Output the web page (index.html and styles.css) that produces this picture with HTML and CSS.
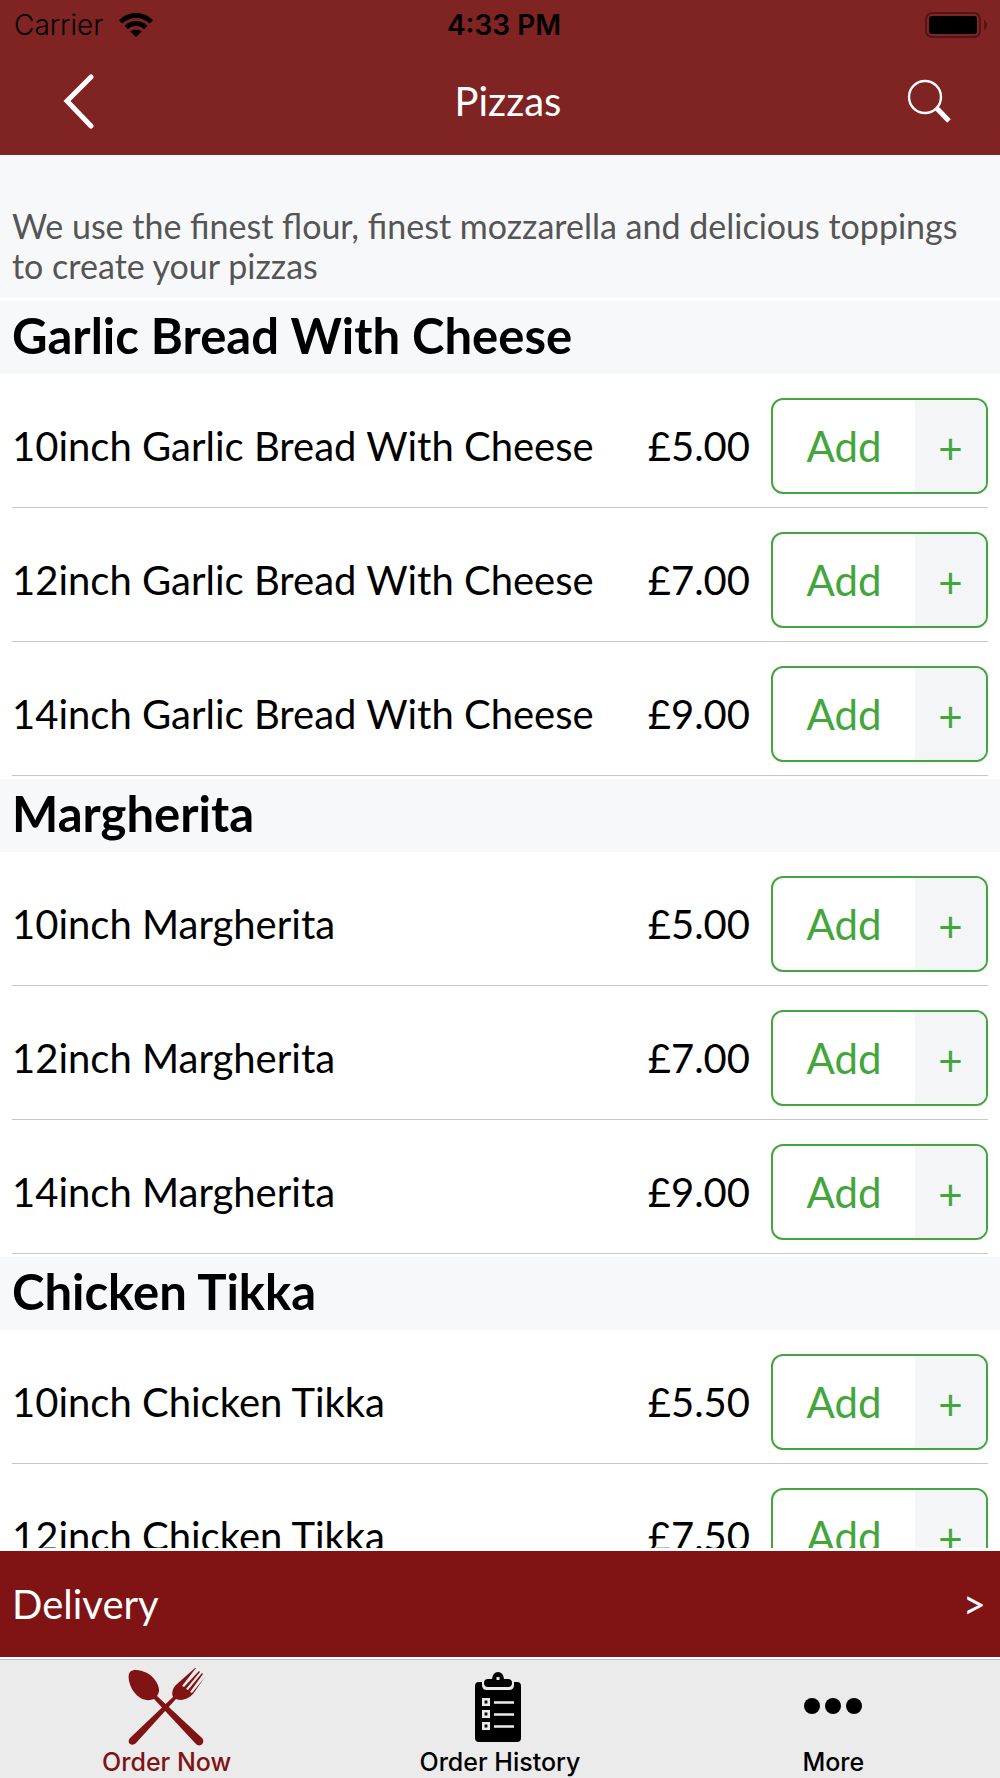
FILE: index.html
```html
<!DOCTYPE html>
<html lang="en">
<head>
    <meta charset="UTF-8">
    <meta name="viewport" content="width=device-width, initial-scale=1.0">
    <title>Pizzas</title>
    <link rel="stylesheet" href="styles.css">
</head>
<body>
    <header class="header">
        <div class="status-bar">
            <div class="carrier">
                <span>Carrier</span>
                <svg width="34" height="24" viewBox="0 0 34 24" aria-hidden="true">
                    <path d="M0 7.200C9.500-2.400 24.500-2.400 34 7.200L30.700 10.500C23 3 11 3 3.300 10.500Z"/>
                    <path d="M5.500 12.700C12 6.500 22 6.500 28.500 12.700L25 16.200C20.500 12 13.500 12 9 16.200Z"/>
                    <path d="M11.300 18.400C14.500 15.700 19.500 15.700 22.700 18.400L17 24Z"/>
                </svg>
            </div>
            <time class="clock">4:33 PM</time>
            <svg class="battery" width="64" height="28" viewBox="0 0 64 28" aria-hidden="true">
                <rect x="2" y="2" width="54" height="24" rx="6" fill="none" stroke="#521617" stroke-width="2"/>
                <rect x="5" y="5" width="48" height="18" rx="3"/>
                <path d="M60 9C64 11 64 17 60 19Z" fill="#521617"/>
            </svg>
        </div>
        <div class="nav-bar">
            <button class="icon-btn" type="button" aria-label="Back">
                <svg width="32" height="56" viewBox="0 0 32 56" fill="none" stroke="#fff" stroke-width="5" stroke-linecap="round">
                    <path d="M28 4L4 28L28 53"/>
                </svg>
            </button>
            <h1>Pizzas</h1>
            <button class="icon-btn" type="button" aria-label="Search">
                <svg width="44" height="44" viewBox="0 0 44 44" fill="none" stroke="#fff">
                    <circle cx="18" cy="18" r="16" stroke-width="2.400"/>
                    <path d="M29 28.500L42 42" stroke-width="5"/>
                </svg>
            </button>
        </div>
    </header>

    <main class="menu">
        <p class="description">We use the finest flour, finest mozzarella and delicious toppings to create your pizzas</p>

        <section class="group">
            <h2>Garlic Bread With Cheese</h2>
            <ul>
                <li class="item">
                    <span class="name">10inch Garlic Bread With Cheese</span>
                    <span class="price">£5.00</span>
                    <div class="add"><button class="add-btn" type="button">Add</button><button class="plus-btn" type="button">+</button></div>
                </li>
                <li class="item">
                    <span class="name">12inch Garlic Bread With Cheese</span>
                    <span class="price">£7.00</span>
                    <div class="add"><button class="add-btn" type="button">Add</button><button class="plus-btn" type="button">+</button></div>
                </li>
                <li class="item">
                    <span class="name">14inch Garlic Bread With Cheese</span>
                    <span class="price">£9.00</span>
                    <div class="add"><button class="add-btn" type="button">Add</button><button class="plus-btn" type="button">+</button></div>
                </li>
            </ul>
        </section>

        <section class="group">
            <h2>Margherita</h2>
            <ul>
                <li class="item">
                    <span class="name">10inch Margherita</span>
                    <span class="price">£5.00</span>
                    <div class="add"><button class="add-btn" type="button">Add</button><button class="plus-btn" type="button">+</button></div>
                </li>
                <li class="item">
                    <span class="name">12inch Margherita</span>
                    <span class="price">£7.00</span>
                    <div class="add"><button class="add-btn" type="button">Add</button><button class="plus-btn" type="button">+</button></div>
                </li>
                <li class="item">
                    <span class="name">14inch Margherita</span>
                    <span class="price">£9.00</span>
                    <div class="add"><button class="add-btn" type="button">Add</button><button class="plus-btn" type="button">+</button></div>
                </li>
            </ul>
        </section>

        <section class="group">
            <h2>Chicken Tikka</h2>
            <ul>
                <li class="item">
                    <span class="name">10inch Chicken Tikka</span>
                    <span class="price">£5.50</span>
                    <div class="add"><button class="add-btn" type="button">Add</button><button class="plus-btn" type="button">+</button></div>
                </li>
                <li class="item">
                    <span class="name">12inch Chicken Tikka</span>
                    <span class="price">£7.50</span>
                    <div class="add"><button class="add-btn" type="button">Add</button><button class="plus-btn" type="button">+</button></div>
                </li>
            </ul>
        </section>
    </main>

    <button class="delivery" type="button">
        <span>Delivery</span>
        <span class="arrow">&gt;</span>
    </button>

    <nav class="tabs">
        <a class="tab active" href="#order">
            <svg width="78" height="78" viewBox="1 0 78 78" fill="currentColor" aria-hidden="true">
                <!-- spoon -->
                <path d="M3 4C8-1 23 4 28 12C33 19 33 24 30 28L75 70C79 75 73 80 69 76L27 31C20 34 12 31 7 24C2 17 0 8 3 4Z"/>
                <!-- fork -->
                <path d="M69 0L55 18L57 19L72 3L73 4L59 21L61 22L75 5L76 6L63 24L65 25L78 9L66 26C60 32 54 33 49 31L9 75C5 79-1 75 3 70L46 29C44 25 46 19 50 16L68 0Z"/>
            </svg>
            <span>Order Now</span>
        </a>
        <a class="tab" href="#history">
            <svg width="78" height="78" viewBox="2 0 78 78" fill="currentColor" aria-hidden="true">
                <path d="M20 14H23V17Q23 22 28 22H50Q55 22 55 17V14H58Q62 14 62 18V70Q62 74 58 74H20Q16 74 16 70V18Q16 14 20 14Z"/>
                <path fill-rule="evenodd" d="M29 11H33Q34 4 39 4Q44 4 45 11H49Q53 11 53 15Q53 19 49 19H29Q25 19 25 15Q25 11 29 11ZM37.500 9V12H40.500V9Z"/>
                <g fill="none" stroke="#ebebeb">
                    <path stroke-width="2.600" d="M24.300 31.300h5.400v5.400h-5.400zM24.300 43.300h5.400v5.400h-5.400zM24.300 55.300h5.400v5.400h-5.400z"/>
                    <path stroke-width="2.400" d="M35 34.500H55M35 46.500H55M35 58.500H55"/>
                </g>
            </svg>
            <span>Order History</span>
        </a>
        <a class="tab" href="#more">
            <svg width="78" height="78" viewBox="0 0 78 78" fill="currentColor" aria-hidden="true">
                <circle cx="18" cy="38" r="8"/>
                <circle cx="39" cy="38" r="8"/>
                <circle cx="60" cy="38" r="8"/>
            </svg>
            <span>More</span>
        </a>
    </nav>
</body>
</html>
```
FILE: styles.css
```css
* {
    box-sizing: border-box;
}
body {
    margin: 0;
    height: 100vh;
    display: flex;
    flex-direction: column;
    background: #fff;
    color: #000;
    font-family: Lato, "Open Sans", sans-serif;
}
h1, h2, p, ul {
    margin: 0;
    padding: 0;
}
button {
    margin: 0;
    padding: 0;
    border: none;
    background: none;
    font-family: inherit;
    cursor: pointer;
}
svg {
    display: block;
}

/* Header */
.header {
    flex: none;
    background: #7f2423;
}
.status-bar {
    display: grid;
    grid-template-columns: 1fr auto 1fr;
    align-items: center;
    height: 50px;
    padding: 0 12px 0 14px;
    font-family: Inter, sans-serif;
    font-size: 28px;
}
.carrier {
    display: flex;
    align-items: center;
    gap: 16px;
    font-weight: 300;
}
.clock {
    padding-left: 6px;
    font-weight: 600;
}
.battery {
    justify-self: end;
}
.nav-bar {
    display: flex;
    align-items: center;
    justify-content: space-between;
    height: 105px;
    padding: 0 49px 4px 63px;
}
.nav-bar h1 {
    padding-left: 14px;
    color: #fff;
    font-size: 40px;
    font-weight: 400;
    line-height: 48px;
}

/* Menu list */
.menu {
    flex: 1;
    min-height: 0;
    overflow: hidden;
    margin-bottom: 3px;
}
.description {
    padding: 51px 12px 12px;
    background: #f7f8fa;
    color: #555;
    font-size: 34px;
    line-height: 40px;
}
.group {
    padding-top: 3px;
}
.group h2 {
    height: 73px;
    padding: 0 12px;
    background: #f7f8fa;
    font-size: 49px;
    font-weight: 700;
    line-height: 68px;
}
.group ul {
    list-style: none;
    padding: 0 12px;
}
.item {
    display: flex;
    align-items: center;
    padding: 24px 0 13px;
    border-bottom: 1px solid #c8c8c8;
    font-size: 40px;
}
.name {
    flex: 1;
}
.price {
    margin-right: 21px;
}
.add {
    display: flex;
    width: 217px;
    height: 96px;
    border: 2px solid #43a63c;
    border-radius: 12px;
    overflow: hidden;
}
.add button {
    color: #43a63c;
    font-size: 42px;
}
.add .add-btn {
    flex: 1;
}
.add .plus-btn {
    width: 71px;
    padding-top: 4px;
    background: #f4f5f7;
}

/* Delivery bar */
.delivery {
    flex: none;
    display: flex;
    align-items: center;
    justify-content: space-between;
    height: 106px;
    padding: 0 14px 0 12px;
    background: #801314;
    color: #fff;
    font-size: 40px;
}

/* Bottom tabs */
.tabs {
    flex: none;
    display: grid;
    grid-template-columns: repeat(3, 1fr);
    margin-top: 2px;
    border-top: 1px solid #c0c0c0;
    background: #ebebeb;
    font-family: Inter, sans-serif;
    font-size: 25px;
    font-weight: 500;
    line-height: 32px;
}
.tab {
    display: flex;
    flex-direction: column;
    align-items: center;
    padding: 8px 0 0;
    color: #000;
    text-decoration: none;
}
.tab.active {
    color: #801314;
}
```
